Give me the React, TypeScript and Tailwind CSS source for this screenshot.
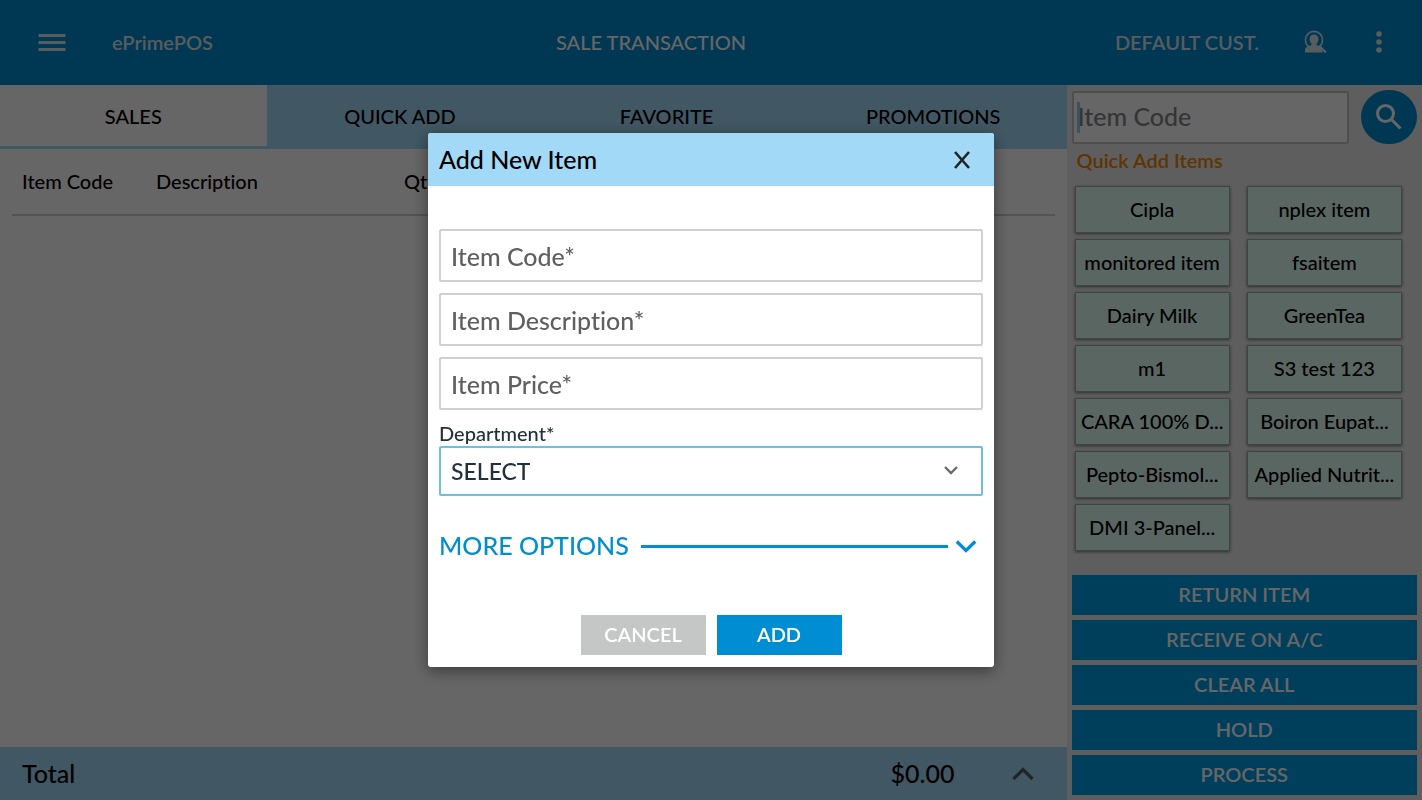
import React from "react";

const tabs = ["SALES", "QUICK ADD", "FAVORITE", "PROMOTIONS"];

const quickItems = [
  "Cipla",
  "nplex item",
  "monitored item",
  "fsaitem",
  "Dairy Milk",
  "GreenTea",
  "m1",
  "S3 test 123",
  "CARA 100% D...",
  "Boiron Eupat...",
  "Pepto-Bismol...",
  "Applied Nutrit...",
  "DMI 3-Panel...",
];

const actions = ["RETURN ITEM", "RECEIVE ON A/C", "CLEAR ALL", "HOLD", "PROCESS"];

const fields = ["Item Code*", "Item Description*", "Item Price*"];

function Header() {
  return (
    <header className="grid h-[85px] grid-cols-[520px_1fr_auto] items-center bg-[#0089d0] pr-[35px] pb-[2px] pl-9 text-[20px] font-semibold">
      <div className="flex items-center gap-11 text-[#d9e6ee]">
        <button type="button" aria-label="Menu" className="flex">
          <svg width="32" height="24" viewBox="0 0 32 24" fill="currentColor">
            <path d="M2.500 4h27v3h-27zM2.500 11h27v3h-27zM2.500 18h27v3h-27z" />
          </svg>
        </button>
        <span>ePrimePOS</span>
      </div>
      <h1 className="font-medium text-white">SALE TRANSACTION</h1>
      <div className="flex items-center justify-end gap-11 text-[#d9e6ee]">
        <span>DEFAULT CUST.</span>
        <button type="button" aria-label="Find customer" className="flex">
          <svg width="24" height="24" viewBox="0 0 24 24" fill="none">
            <circle cx="11" cy="10" r="8.600" stroke="currentColor" strokeWidth="1.600" />
            <path d="M16.500 16l6.500 6.500" stroke="currentColor" strokeWidth="2.200" />
            <path
              d="M11 4.600c-2.700 0-4.400 1.900-4.400 4.600 0 1.700.7 3.300 1.800 4.200v1.700C5.200 16.200 2 17.200 2 20v2.500h17.500V20c0-2.800-2.700-3.800-5.900-4.900v-1.700c1.100-.9 1.800-2.500 1.800-4.200 0-2.700-1.700-4.600-4.400-4.600z"
              fill="currentColor"
            />
          </svg>
        </button>
        <button type="button" aria-label="More" className="flex">
          <svg width="16" height="24" viewBox="0 0 16 24" fill="currentColor">
            <circle cx="8" cy="4" r="2.800" />
            <circle cx="8" cy="12" r="2.800" />
            <circle cx="8" cy="20" r="2.800" />
          </svg>
        </button>
      </div>
    </header>
  );
}

function Sales() {
  return (
    <main className="flex w-3/4 flex-col bg-white">
      <nav className="grid h-16 grid-cols-4 bg-[#a2d9f7] text-[20px]">
        {tabs.map((tab, i) => (
          <button
            key={tab}
            type="button"
            className={i === 0 ? "border-b-3 border-[#a2d9f7] bg-white" : "border-b-3 border-[#a2d9f7]"}
          >
            {tab}
          </button>
        ))}
      </nav>
      <div className="flex-1 px-3">
        <table className="w-full table-fixed text-left text-[20px]">
          <thead>
            <tr className="h-[66px] border-b-2 border-[#d0d0d0]">
              <th className="w-[134px] pb-[2px] pl-[10px] font-medium">Item Code</th>
              <th className="w-[248px] pb-[2px] pl-[10px] font-medium">Description</th>
              <th className="pb-[2px] pl-[10px] font-medium">Qty</th>
            </tr>
          </thead>
        </table>
      </div>
      <footer className="flex h-[53px] items-center bg-[#a2d9f7] pr-8 pl-[22px] text-[25px]">
        <span className="flex-1">Total</span>
        <span>$0.00</span>
        <button type="button" aria-label="Show totals" className="ml-14 flex">
          <svg width="24" height="24" viewBox="0 0 24 24" fill="none" stroke="#4c5a62" strokeWidth="3.200">
            <path d="M2.500 17l9.500-9.500 9.500 9.500" />
          </svg>
        </button>
      </footer>
    </main>
  );
}

function Sidebar() {
  return (
    <aside className="flex w-1/4 flex-col bg-[#ebebeb] p-[5px] text-[20px]">
      <div className="flex items-center gap-3">
        <div className="relative min-w-0 flex-1">
          <input
            aria-label="Item Code"
            placeholder="Item Code"
            className="block h-[53px] w-full rounded-[2px] border-2 border-[#c4c4c4] bg-white px-1 pb-[2px] text-[25px] outline-none placeholder:text-[#858585]"
          />
          <span className="absolute top-[11px] left-[5px] h-[31px] w-[3px] bg-[#7ac4f0]/80" />
        </div>
        <button
          type="button"
          aria-label="Search"
          className="flex h-[54px] w-14 items-center justify-center rounded-full bg-[#0089d0] text-white"
        >
          <svg width="28" height="28" viewBox="0 0 28 28" fill="none" stroke="currentColor" strokeWidth="3">
            <circle cx="10.500" cy="10.500" r="8" />
            <path d="M16.500 16.500l9 9" />
          </svg>
        </button>
      </div>
      <h2 className="pt-1 pl-[5px] leading-6 font-semibold text-[#f08200]">Quick Add Items</h2>
      <div className="mt-[14px] grid grid-cols-2 gap-x-[17px] gap-y-[6px] pr-[15px] pl-[3px]">
        {quickItems.map((item) => (
          <button
            key={item}
            type="button"
            className="h-[47px] overflow-hidden border border-[#93b0a9] bg-[#e0fff6] pb-[2px] whitespace-nowrap shadow-[0_1px_3px_rgba(0,0,0,0.5)]"
          >
            {item}
          </button>
        ))}
      </div>
      <div className="mt-auto flex flex-col gap-[5px]">
        {actions.map((action) => (
          <button key={action} type="button" className="h-10 bg-[#009de6] pb-[2px] font-semibold text-white">
            {action}
          </button>
        ))}
      </div>
    </aside>
  );
}

function AddItemDialog() {
  return (
    <div className="fixed inset-0 flex items-center justify-center bg-black/60">
      <section
        role="dialog"
        aria-modal="true"
        aria-labelledby="dialog-title"
        className="w-[566px] overflow-hidden rounded-[3px] bg-white shadow-[0_4px_16px_rgba(0,0,0,0.45)]"
      >
        <header className="flex h-[53px] items-center justify-between bg-[#a2d9f7] pr-[22px] pl-[11px]">
          <h2 id="dialog-title" className="text-[25px]">
            Add New Item
          </h2>
          <button type="button" aria-label="Close" className="flex">
            <svg width="20" height="20" viewBox="0 0 20 20" fill="none" stroke="#222" strokeWidth="2.600">
              <path d="M3 2l14 16M17 2l-14 16" />
            </svg>
          </button>
        </header>
        <form className="px-[11px] pt-[43px] pb-3" onSubmit={(e) => e.preventDefault()}>
          <div className="flex flex-col gap-[11px]">
            {fields.map((field) => (
              <input
                key={field}
                aria-label={field}
                placeholder={field}
                className="h-[53px] rounded-[2px] border-2 border-[#d0d0d0] px-[10px] text-[25px] outline-none placeholder:text-[#5f5f5f]"
              />
            ))}
          </div>
          <label htmlFor="department" className="mt-[10px] block text-[20px] leading-[26px] text-[#22303c]">
            Department*
          </label>
          <div className="relative">
            <select
              id="department"
              className="block h-[50px] w-full appearance-none rounded-[2px] border-2 border-[#6cc0e0] bg-white px-[10px] text-[23px] text-[#22303c] outline-none"
            >
              <option>SELECT</option>
            </select>
            <svg
              className="pointer-events-none absolute top-4 right-6"
              width="16"
              height="16"
              viewBox="0 0 16 16"
              fill="none"
              stroke="#6b6b6b"
              strokeWidth="2.400"
            >
              <path d="M2 5l6 6 6-6" />
            </svg>
          </div>
          <button type="button" className="mt-[34px] flex h-8 w-full items-center pr-[6px] text-[25px] text-[#008dd2]">
            MORE OPTIONS
            <span className="mr-[7px] ml-3 h-[3px] flex-1 bg-current" />
            <svg width="22" height="22" viewBox="0 0 22 22" fill="none" stroke="currentColor" strokeWidth="3.200">
              <path d="M1.800 6.500l9.200 9 9.200-9" />
            </svg>
          </button>
          <div className="mt-[53px] flex justify-center gap-[11px] text-[20px] font-semibold text-white">
            <button type="button" className="h-10 w-[125px] bg-[#c5c7c7] pb-[2px]">
              CANCEL
            </button>
            <button type="submit" className="h-10 w-[125px] bg-[#008dd2] pb-[2px]">
              ADD
            </button>
          </div>
        </form>
      </section>
    </div>
  );
}

export default function App() {
  return (
    <div className="flex min-h-screen flex-col font-['Lato',sans-serif] font-medium text-black [font-variant-ligatures:none]">
      <Header />
      <div className="flex flex-1">
        <Sales />
        <Sidebar />
      </div>
      <AddItemDialog />
    </div>
  );
}
